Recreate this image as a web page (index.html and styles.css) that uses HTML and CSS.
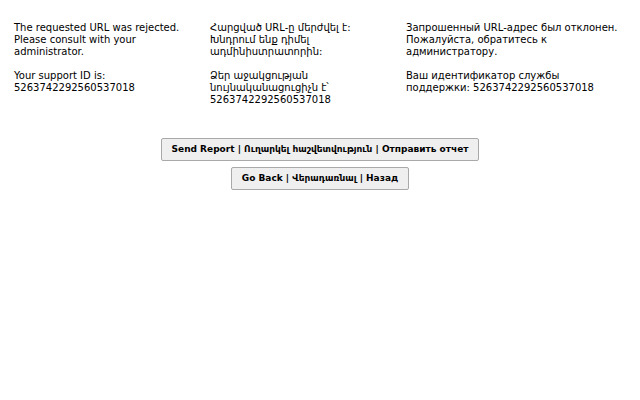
FILE: index.html
```html
<!DOCTYPE html>
<html>
<head>
<meta charset="utf-8">
<title>Request Rejected</title>
<link rel="stylesheet" href="styles.css">
</head>
<body>
<div class="cols">
  <div class="col c1">
    <p>The requested URL was rejected. Please consult with your administrator.</p>
    <p>Your support ID is: 5263742292560537018</p>
  </div>
  <div class="col c2">
    <p>Հարցված URL-ը մերժվել է: Խնդրում ենք դիմել ադմինիստրատորին:</p>
    <p>Ձեր աջակցության նույնականացուցիչն է՝ 5263742292560537018</p>
  </div>
  <div class="col c3">
    <p>Запрошенный URL-адрес был отклонен. Пожалуйста, обратитесь к администратору.</p>
    <p>Ваш идентификатор службы поддержки: 5263742292560537018</p>
  </div>
</div>
<div class="actions">
  <button class="btn" type="button">Send Report | Ուղարկել հաշվետվություն | Отправить отчет</button>
  <button class="btn" type="button">Go Back | Վերադառնալ | Назад</button>
</div>
</body>
</html>
```

FILE: styles.css
```css
html, body {
  margin: 0;
  padding: 0;
  background: #ffffff;
}
body {
  font-family: "DejaVu Sans", sans-serif;
  font-size: 10px;
  line-height: 12px;
  color: #000000;
}
.cols {
  display: flex;
  padding: 22px 0 0 14px;
}
.col p {
  margin: 0 0 12px 0;
}
.col p:last-child {
  margin-bottom: 0;
}
.c1 {
  width: 182px;
  margin-right: 14px;
}
.c2 {
  width: 182px;
  margin-right: 14px;
}
.c3 {
  width: 215px;
}
.actions {
  display: flex;
  flex-direction: column;
  align-items: center;
  gap: 6px;
  margin-top: 32px;
}
.btn {
  font-family: "DejaVu Sans", sans-serif;
  font-size: 9px;
  font-weight: bold;
  line-height: 11px;
  color: #000000;
  background: #efefef;
  border: 1px solid #a9a9a9;
  border-radius: 2px;
  padding: 5px 10px 5px 10px;
  margin: 0;
}
```
